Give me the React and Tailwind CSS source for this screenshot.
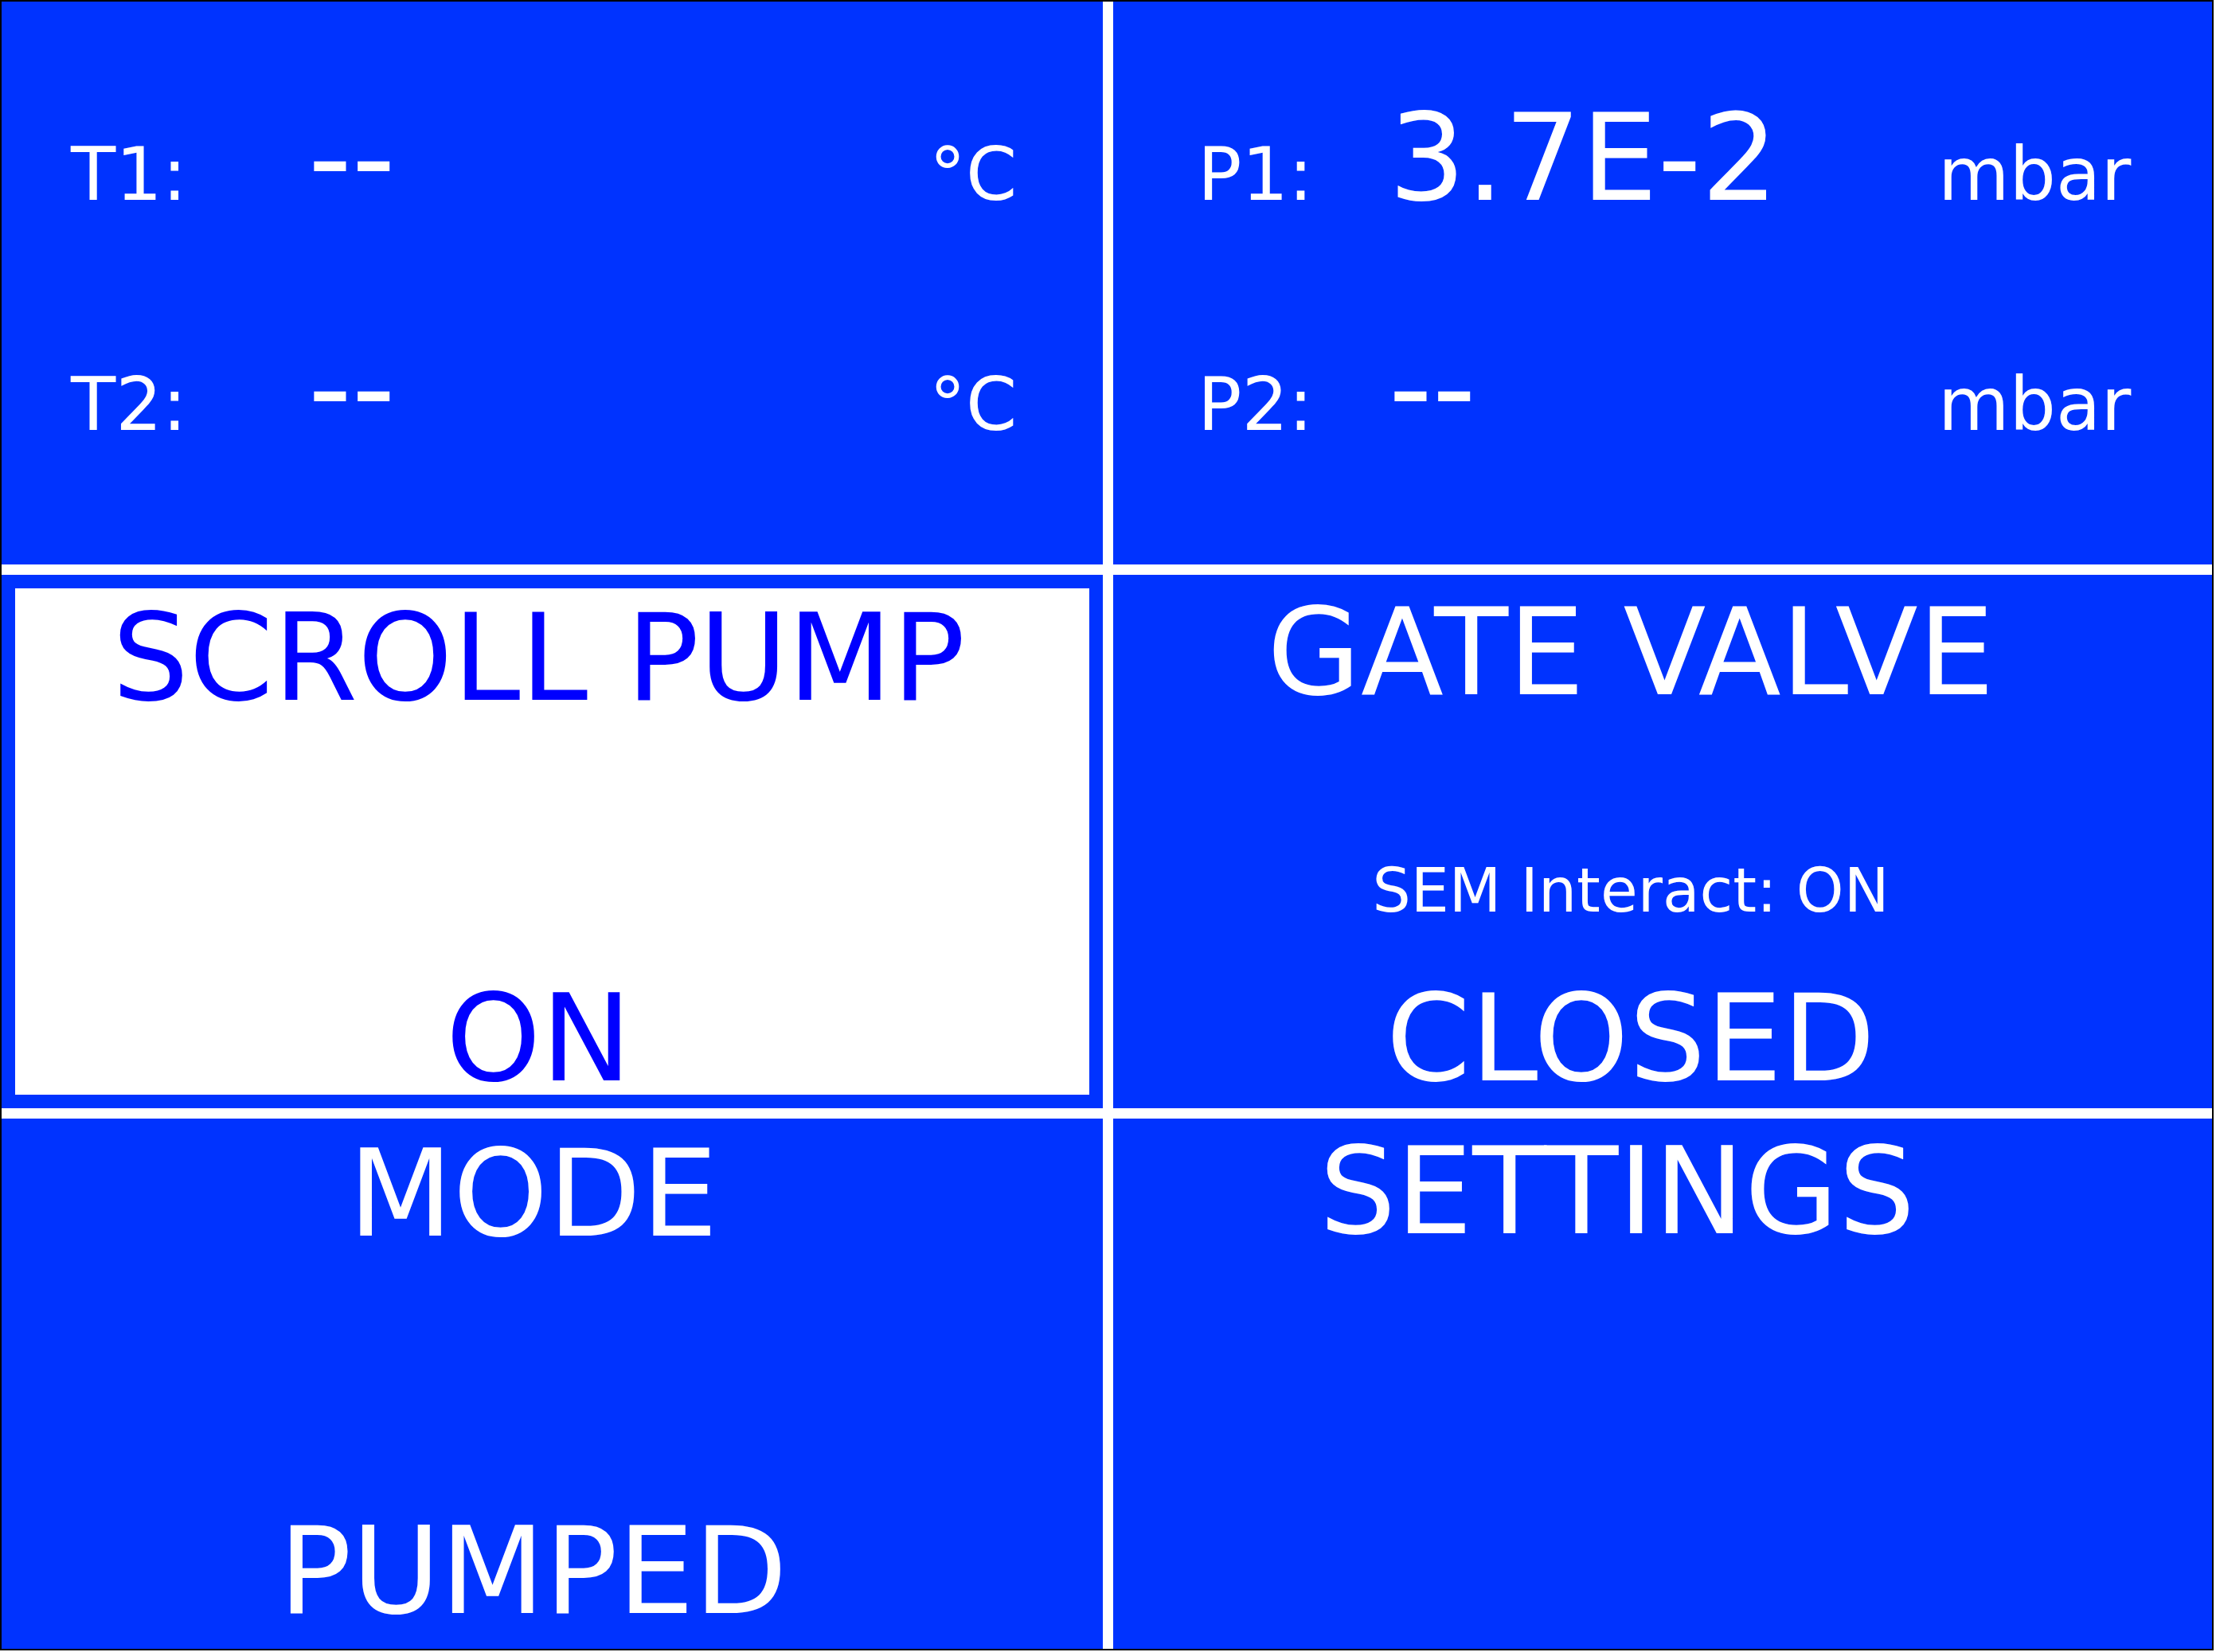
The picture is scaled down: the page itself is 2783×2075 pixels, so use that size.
// App.jsx - vacuum controller status screen

const BLUE = 'bg-[#0033ff]';

function ReadingRow({ label, value, unit, labelW, valueW }) {
  return (
    <div className="flex items-baseline leading-none">
      <span className={`text-[92px] ${labelW}`}>{label}</span>
      <span className={`text-[152px] ${valueW}`}>{value}</span>
      <span className="text-[92px]">{unit}</span>
    </div>
  );
}

export default function App() {
  return (
    <div
      className="w-[2780px] h-[2073px] border-2 border-black bg-white grid grid-cols-[1383px_1380px] grid-rows-[707px_670px_666px] gap-[13px] text-white"
      style={{ fontFamily: '"DejaVu Sans", sans-serif' }}
    >
      {/* temperatures */}
      <div className={`${BLUE} flex flex-col pt-[121px] pl-[87px] gap-[137px]`}>
        <ReadingRow label="T1:" value="--" unit="°C" labelW="w-[298px]" valueW="w-[780px]" />
        <ReadingRow label="T2:" value="--" unit="°C" labelW="w-[298px]" valueW="w-[780px]" />
      </div>

      {/* pressures */}
      <div className={`${BLUE} flex flex-col pt-[121px] pl-[106px] gap-[137px]`}>
        <ReadingRow label="P1:" value="3.7E-2" unit="mbar" labelW="w-[240px]" valueW="w-[690px]" />
        <ReadingRow label="P2:" value="--" unit="mbar" labelW="w-[240px]" valueW="w-[690px]" />
      </div>

      {/* scroll pump - active */}
      <div className="border-[17px] border-[#0033ff] bg-white flex flex-col items-center pr-[34px] text-[#0000ff] text-[152px] leading-none">
        <div className="mt-[12px]">SCROLL PUMP</div>
        <div className="mt-[326px]">ON</div>
      </div>

      {/* gate valve */}
      <div className={`${BLUE} flex flex-col items-center pr-[80px] leading-none`}>
        <div className="mt-[22px] text-[152px]">GATE VALVE</div>
        <div className="mt-[185px] text-[76px]">SEM Interact: ON</div>
        <div className="mt-[72px] text-[152px]">CLOSED</div>
      </div>

      {/* mode */}
      <div className={`${BLUE} flex flex-col items-center pr-[48px] text-[152px] leading-none`}>
        <div className="mt-[19px]">MODE</div>
        <div className="mt-[322px]">PUMPED</div>
      </div>

      {/* settings */}
      <div className={`${BLUE} flex flex-col items-center pr-[114px] text-[152px] leading-none`}>
        <div className="mt-[16px]">SETTINGS</div>
      </div>
    </div>
  );
}
